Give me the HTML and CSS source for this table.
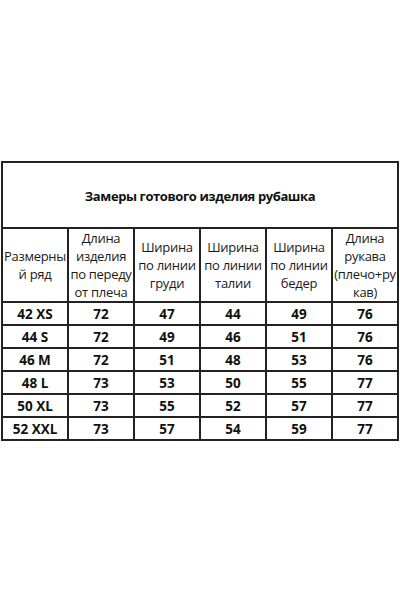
FILE: index.html
```html
<!DOCTYPE html>
<html lang="ru">
<head>
  <meta charset="UTF-8" />
  <title>Замеры готового изделия рубашка</title>
  <link rel="stylesheet" href="styles.css">
</head>
<body>
  <div class="sheet">
    <table class="size-table">
      <colgroup>
        <col><col><col><col><col><col>
      </colgroup>
      <tr class="title-row">
        <td colspan="6">Замеры готового изделия рубашка</td>
      </tr>
      <tr class="head-row">
        <td>Размерны<br>й ряд</td>
        <td>Длина<br>изделия<br>по переду<br>от плеча</td>
        <td>Ширина<br>по линии<br>груди</td>
        <td>Ширина<br>по линии<br>талии</td>
        <td>Ширина<br>по линии<br>бедер</td>
        <td>Длина<br>рукава<br>(плечо+ру<br>кав)</td>
      </tr>
      <tr class="data-row"><td>42 XS</td><td>72</td><td>47</td><td>44</td><td>49</td><td>76</td></tr>
      <tr class="data-row"><td>44 S</td><td>72</td><td>49</td><td>46</td><td>51</td><td>76</td></tr>
      <tr class="data-row"><td>46 M</td><td>72</td><td>51</td><td>48</td><td>53</td><td>76</td></tr>
      <tr class="data-row"><td>48 L</td><td>73</td><td>53</td><td>50</td><td>55</td><td>77</td></tr>
      <tr class="data-row"><td>50 XL</td><td>73</td><td>55</td><td>52</td><td>57</td><td>77</td></tr>
      <tr class="data-row"><td>52 XXL</td><td>73</td><td>57</td><td>54</td><td>59</td><td>77</td></tr>
    </table>
  </div>
</body>
</html>
```

FILE: styles.css
```css
/* Base Reset */
* {
  margin: 0;
  padding: 0;
  box-sizing: border-box;
}

body {
  font-family: 'Open Sans', 'Noto Sans', sans-serif;
  background: #fff;
  color: #111;
  width: 400px;
  height: 600px;
  overflow: hidden;
}

/* Sheet */
.sheet {
  padding: 161px 1px 0 1px;
}

/* Table */
.size-table {
  width: 398px;
  border-collapse: collapse;
  table-layout: fixed;
  border: 2px solid #222;
}

.size-table td {
  border: 2px solid #222;
  text-align: center;
  vertical-align: middle;
  overflow: hidden;
  white-space: nowrap;
}

/* Title */
.title-row td {
  height: 66px;
  font-size: 13px;
  font-weight: 700;
  letter-spacing: -0.4px;
  padding-top: 2px;
}

/* Header */
.head-row td {
  height: 73px;
  font-size: 13px;
  line-height: 18px;
  font-weight: 400;
  color: #1a1a1a;
  letter-spacing: -0.3px;
}

/* Data */
.data-row td {
  height: 23px;
  font-size: 13.5px;
  font-weight: 700;
  line-height: 18px;
}
```
